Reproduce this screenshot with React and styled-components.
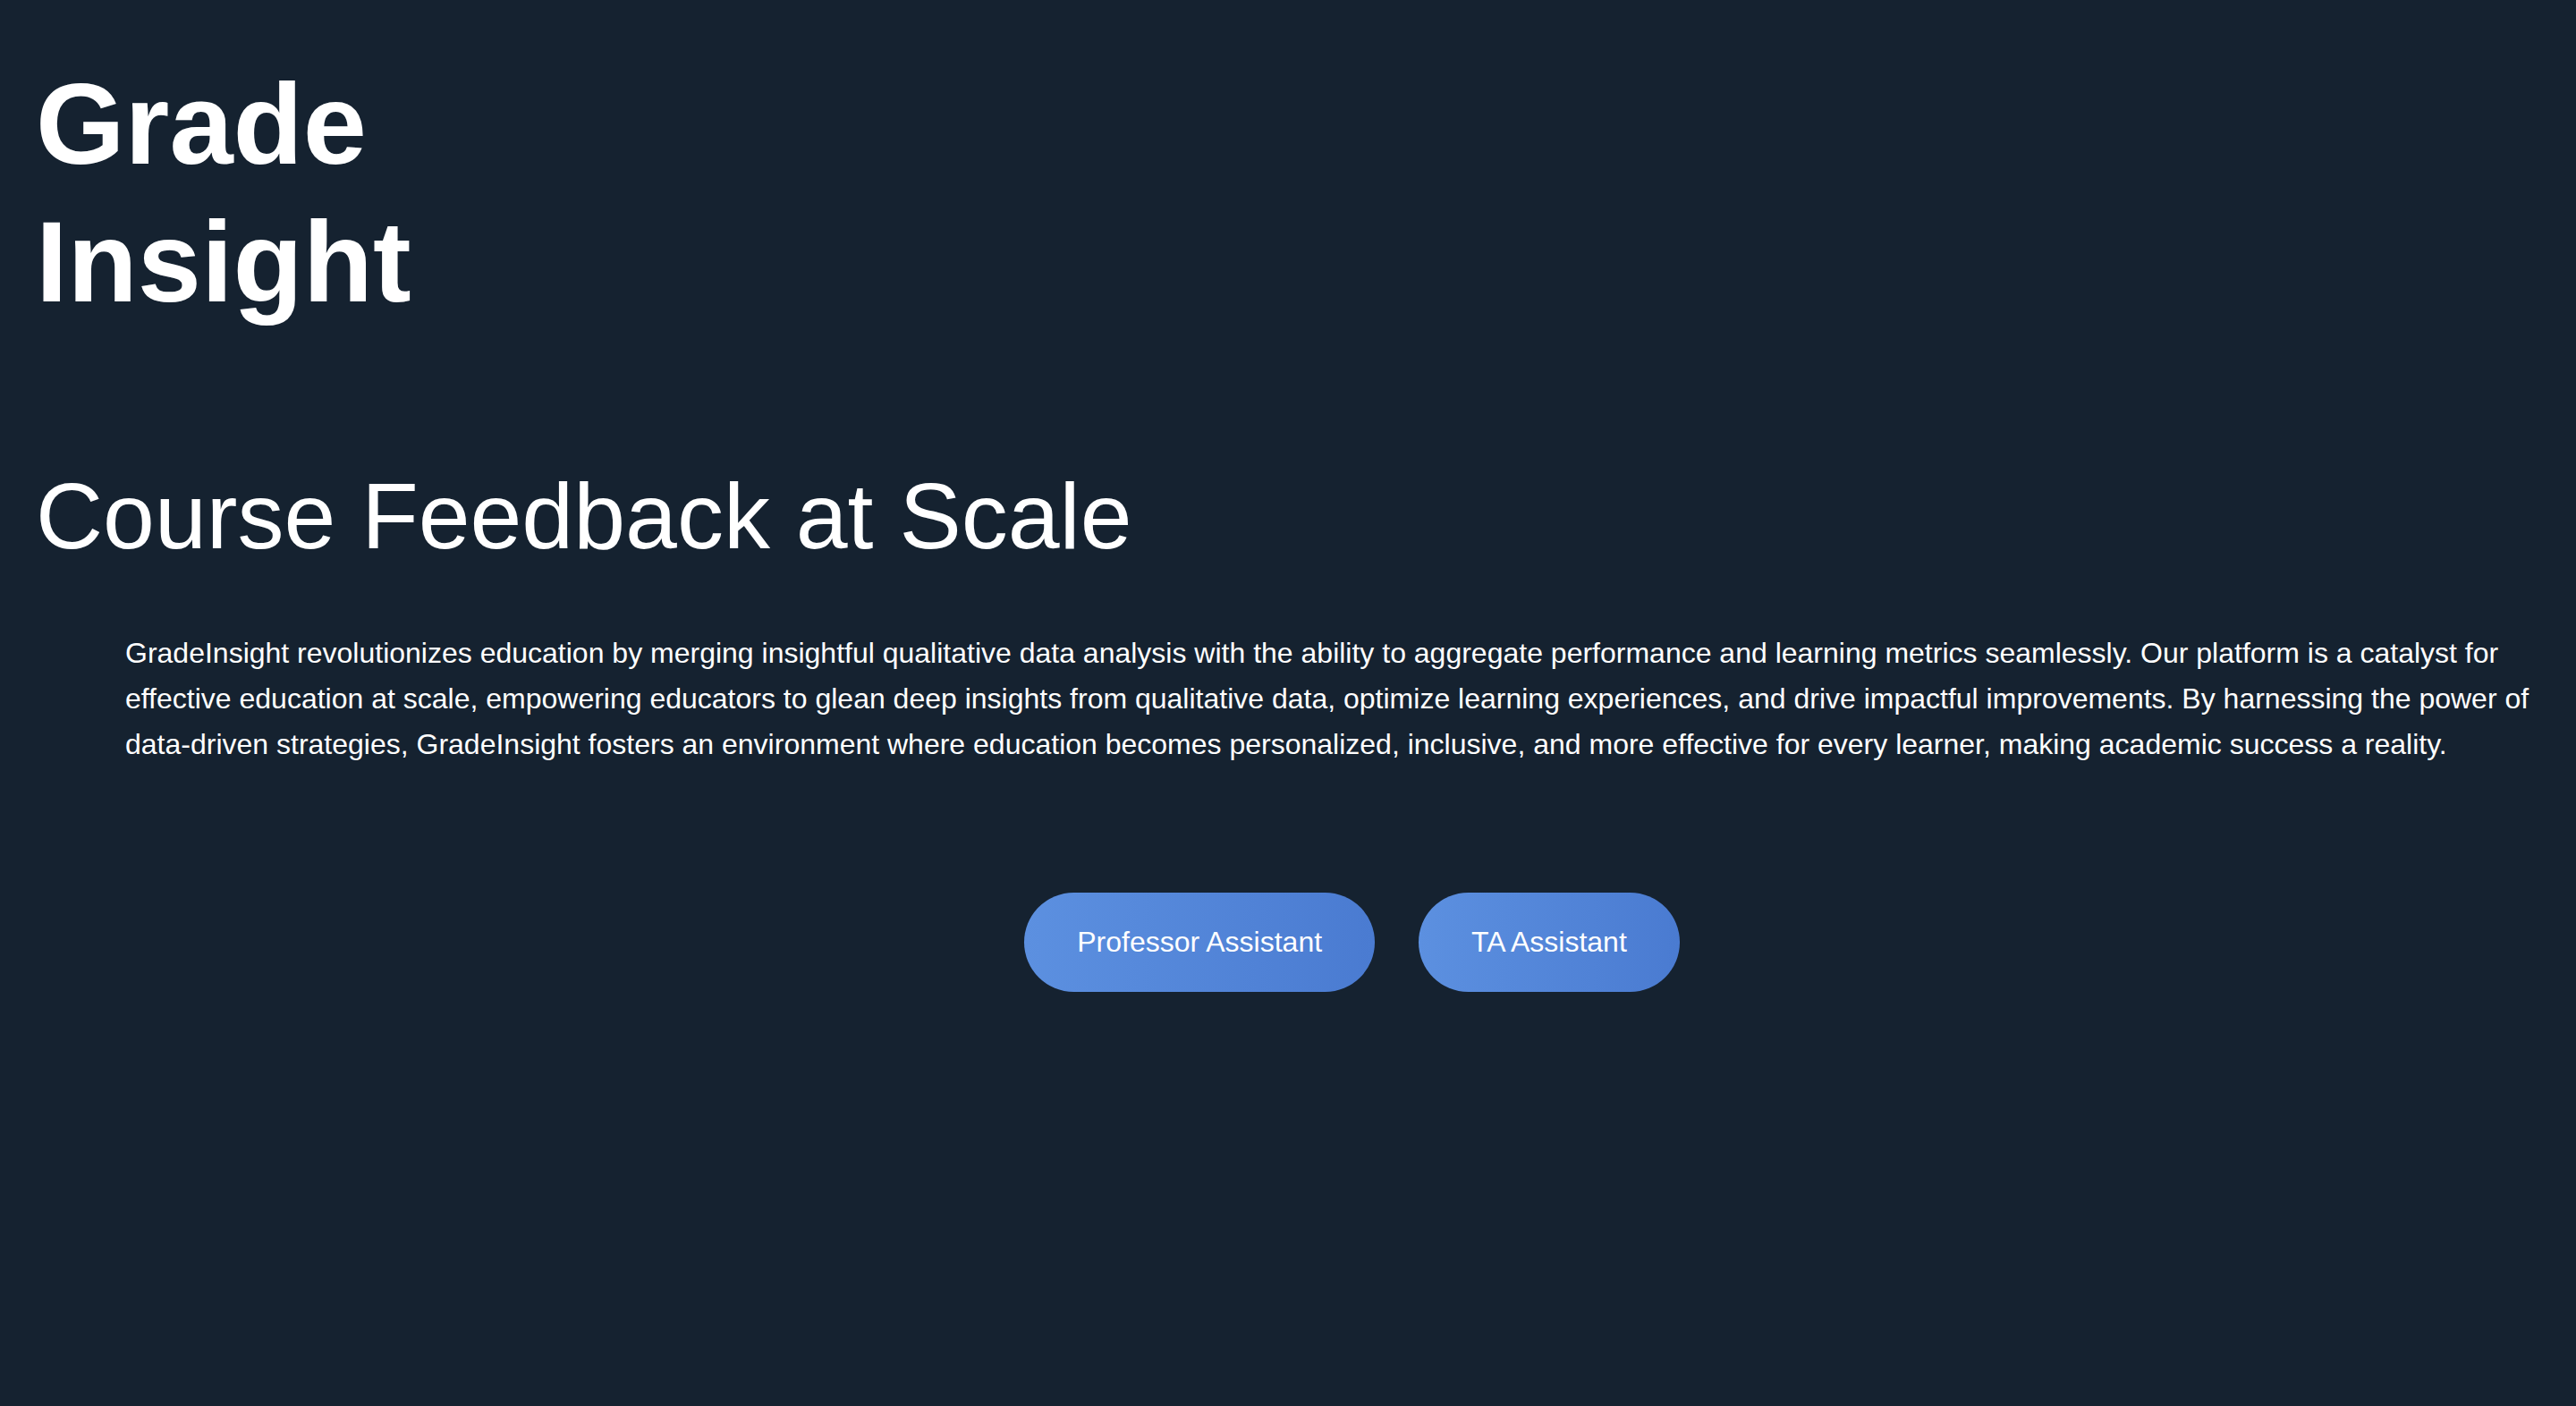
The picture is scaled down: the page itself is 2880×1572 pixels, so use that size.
import React from "react";
import styled, { createGlobalStyle } from "styled-components";

const GlobalStyle = createGlobalStyle`
  html, body {
    margin: 0;
    padding: 0;
    background-color: #152230;
  }

  body {
    min-height: 100vh;
    font-family: "Liberation Sans", Arial, Helvetica, sans-serif;
    color: #fff;
  }
`;

const Page = styled.main`
  min-height: 100vh;
  padding: 62px 0 0 40px;
  box-sizing: border-box;
  background-color: #152230;
`;

const Title = styled.h1`
  margin: 0;
  font-size: 128px;
  font-weight: 700;
  line-height: 1.2;
`;

const Subtitle = styled.h2`
  margin: 146px 0 0;
  font-size: 104px;
  font-weight: 400;
  line-height: 1.2;
`;

const Content = styled.section`
  margin: 65px 0 0 100px;
`;

const Description = styled.p`
  margin: 0;
  font-size: 32px;
  line-height: 1.6;
`;

const ButtonRow = styled.div`
  margin-top: 139px;
  display: flex;
  justify-content: center;
  gap: 49px;
  padding-left: 3px;
`;

const Button = styled.button`
  height: 111px;
  padding: 0 59px;
  display: inline-flex;
  align-items: center;
  border: none;
  border-radius: 999px;
  background: linear-gradient(to right, #5c90e0, #4a7bd1);
  color: #fff;
  font-family: "Liberation Sans", Arial, sans-serif;
  font-size: 32px;
  cursor: pointer;

  &:hover {
    background: linear-gradient(to right, #6a9be6, #5586d8);
  }
`;

const App = () => {
  return (
    <>
      <GlobalStyle />
      <Page>
        <Title>
          Grade
          <br />
          Insight
        </Title>
        <Subtitle>Course Feedback at Scale</Subtitle>
        <Content>
          <Description>
            GradeInsight revolutionizes education by merging insightful
            qualitative data analysis with the ability to aggregate performance
            and learning metrics seamlessly. Our platform is a catalyst for
            effective education at scale, empowering educators to glean deep
            insights from qualitative data, optimize learning experiences, and
            drive impactful improvements. By harnessing the power of
            data-driven strategies, GradeInsight fosters an environment where
            education becomes personalized, inclusive, and more effective for
            every learner, making academic success a reality.
          </Description>
          <ButtonRow>
            <Button>Professor Assistant</Button>
            <Button>TA Assistant</Button>
          </ButtonRow>
        </Content>
      </Page>
    </>
  );
};

export default App;
